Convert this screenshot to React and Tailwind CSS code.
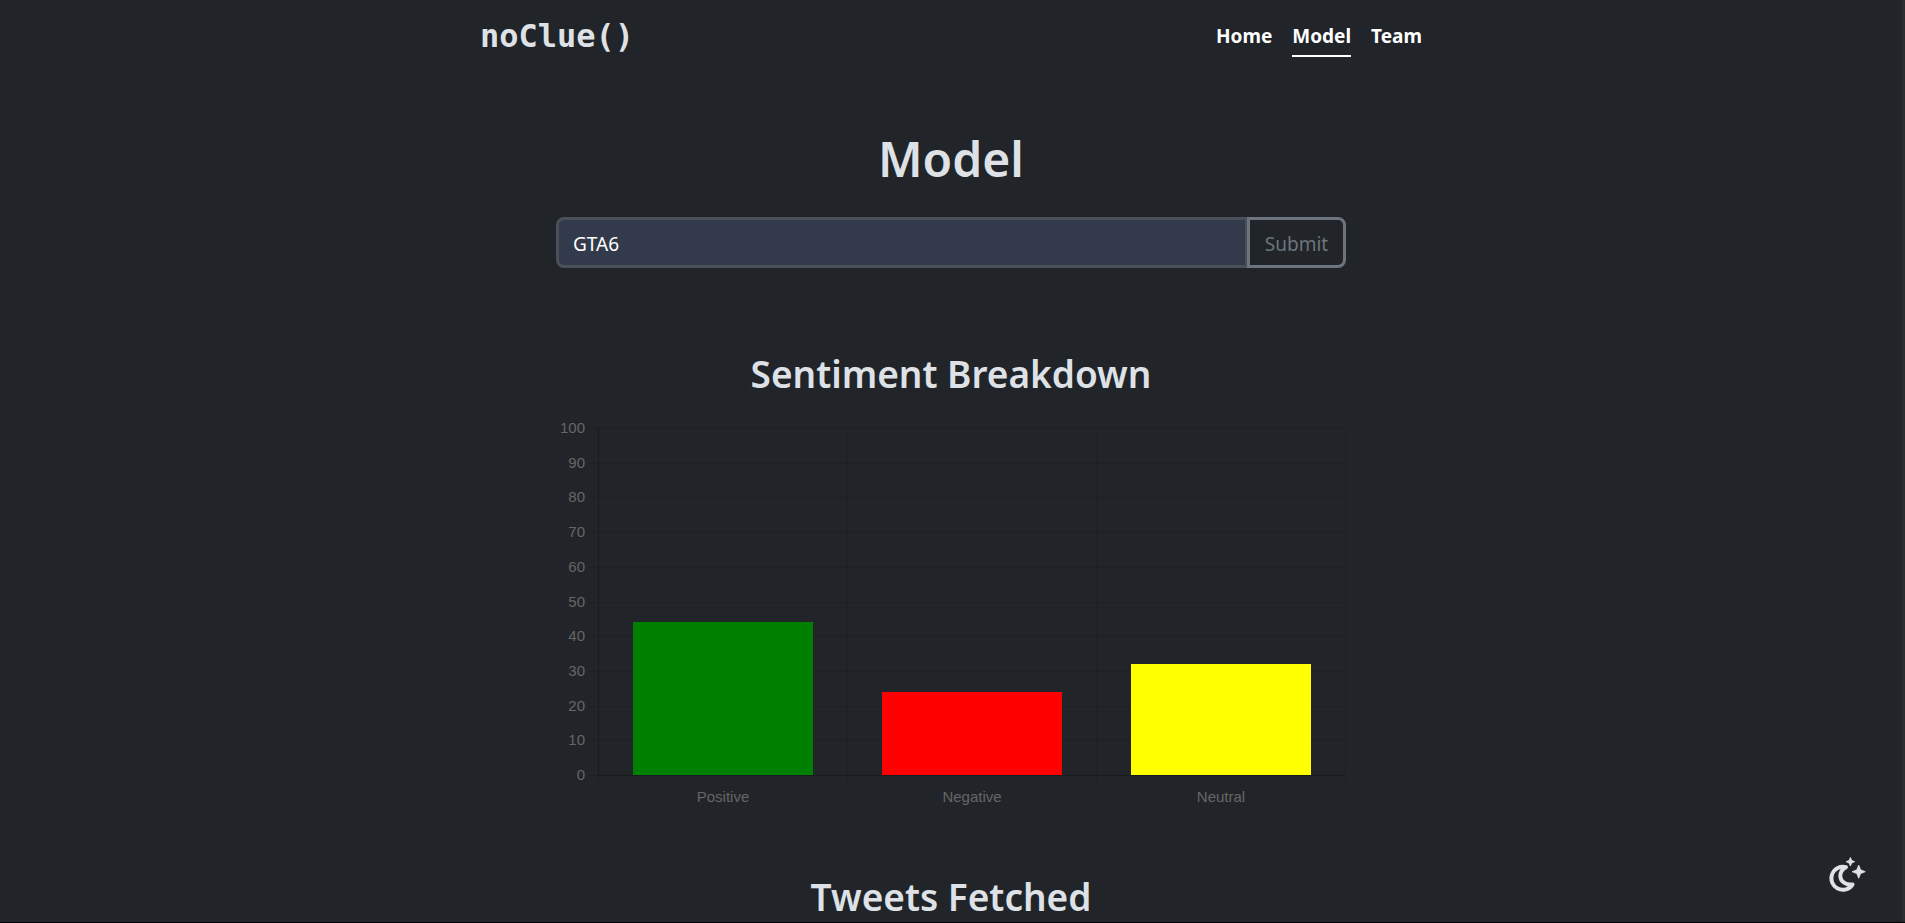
const bars = [
  { label: 'Positive', value: 44, color: 'green' },
  { label: 'Negative', value: 24, color: 'red' },
  { label: 'Neutral', value: 32, color: 'yellow' },
];

const ticks = [0, 10, 20, 30, 40, 50, 60, 70, 80, 90, 100];

const plot = { left: 42, top: 9, width: 747, height: 347 };

function SentimentChart() {
  const column = plot.width / bars.length;
  const barWidth = 180;
  const base = plot.top + plot.height;
  const yOf = (v) => Math.round(base - (v / 100) * plot.height);
  return (
    <svg
      viewBox="0 0 790 396"
      role="img"
      aria-label="Sentiment breakdown bar chart"
      className="block w-full font-['Liberation_Sans',Arial,sans-serif] text-[15px]"
    >
      <g fill="#000" fillOpacity="0.1">
        {ticks.map((t) => (
          <rect key={t} x={plot.left - 10} y={yOf(t)} width={plot.width + 10} height="1" />
        ))}
        {[0, 1, 2, 3].map((i) => (
          <rect key={i} x={plot.left + i * column} y={plot.top} width="1" height={plot.height + 10} />
        ))}
      </g>
      <rect x={plot.left} y={plot.top} width="1" height={plot.height} fill="#000" fillOpacity="0.15" />
      <rect x={plot.left} y={base} width={plot.width} height="1" fill="#000" fillOpacity="0.15" />
      <g fill="#666" textAnchor="end">
        {ticks.map((t) => (
          <text key={t} x="29" y={yOf(t) + 5}>{t}</text>
        ))}
      </g>
      {bars.map((b, i) => {
        const center = Math.ceil(plot.left + column * (i + 0.5));
        return (
          <g key={b.label}>
            <rect
              x={center - barWidth / 2}
              y={yOf(b.value)}
              width={barWidth}
              height={base - yOf(b.value)}
              fill={b.color}
            />
            <text x={center} y={base + 27} textAnchor="middle" fill="#666">{b.label}</text>
          </g>
        );
      })}
    </svg>
  );
}

function MoonStars() {
  return (
    <svg viewBox="0 0 40 40" className="size-10" aria-hidden="true">
      <path
        d="M20 11.2 A11.5 11.5 0 1 0 26.6 28.4 C20 29.3 14.3 25.6 14.3 20 C14.3 16 16.5 13 20 11.2 Z"
        fill="none"
        stroke="#dee2e6"
        strokeWidth="3.9"
        strokeLinejoin="round"
      />
      <g fill="#dee2e6" stroke="#dee2e6" strokeWidth="0.8" strokeLinejoin="round">
        <path d="M24.4 1.4 L25.7 4.4 L28.7 5.7 L25.7 7 L24.4 10 L23.1 7 L20.1 5.7 L23.1 4.4 Z" />
        <path d="M32.7 9.1 L34.6 13.8 L39.3 15.7 L34.6 17.6 L32.7 22.3 L30.8 17.6 L26.1 15.7 L30.8 13.8 Z" />
      </g>
    </svg>
  );
}

const navItems = ['Home', 'Model', 'Team'];

export default function App() {
  return (
    <div className="relative flex h-screen overflow-hidden border-b border-black bg-[#212529] font-['Noto_Sans','Open_Sans',sans-serif] text-[#dee2e6]">
      <div className="min-w-0 flex-1">
        <div className="mx-auto w-full max-w-[942px]">
          <header className="flex h-[75px] items-center justify-between">
            <a href="#top" className="pb-1 font-['DejaVu_Sans_Mono',monospace] text-[32px] leading-10 font-bold">
              noClue()
            </a>
            <nav className="flex gap-5 text-[19px] leading-7 font-bold text-white">
              {navItems.map((item) => (
                <a
                  key={item}
                  href={`#${item.toLowerCase()}`}
                  aria-current={item === 'Model' ? 'page' : undefined}
                  className={
                    item === 'Model'
                      ? 'border-b-2 border-white pt-[3px] pb-[5px]'
                      : 'border-b-2 border-transparent pt-[3px] pb-[5px]'
                  }
                >
                  {item}
                </a>
              ))}
            </nav>
          </header>
          <main className="mx-auto w-full max-w-[790px]">
            <h1 className="pt-[54px] text-center text-[48px] leading-[60px] font-semibold">Model</h1>
            <form className="mt-7 flex h-[51px] text-[19px]" onSubmit={(e) => e.preventDefault()}>
              <input
                type="text"
                aria-label="Search term"
                defaultValue="GTA6"
                className="min-w-0 flex-1 rounded-l-lg border-3 border-r-2 border-[#495057] bg-[#323a4b] px-[14px] pt-[3px] text-white outline-none"
              />
              <button type="submit" className="w-[99px] rounded-r-lg border-3 border-[#6c757d] pt-[3px] text-[#6c757d]">
                Submit
              </button>
            </form>
            <section>
              <h2 className="mt-20 text-center text-[37px] leading-[52px] font-semibold">Sentiment Breakdown</h2>
              <div className="mt-[19px]">
                <SentimentChart />
              </div>
            </section>
            <section>
              <h2 className="mt-14 text-center text-[37px] leading-[52px] font-semibold">Tweets Fetched</h2>
            </section>
          </main>
        </div>
      </div>
      <button type="button" aria-label="Toggle dark mode" className="absolute right-[39px] bottom-[26px]">
        <MoonStars />
      </button>
      <div className="w-[3px] bg-[#2c2c2c]" />
    </div>
  );
}
